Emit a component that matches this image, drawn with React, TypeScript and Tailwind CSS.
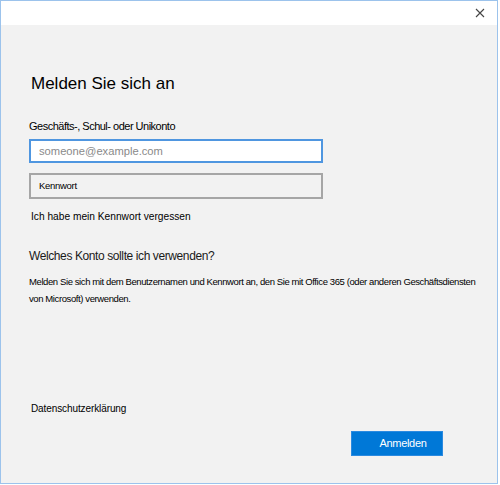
import React from 'react';

export default function App() {
  return (
    <div className="w-[500px] h-[485px] bg-white" style={{ fontFamily: '"Liberation Sans", Arial, sans-serif' }}>
      <div className="w-[498px] h-[484px] border border-[#9cc3ec] flex flex-col bg-[#f2f2f2]">
        {/* Title bar */}
        <div className="h-[24px] bg-white flex justify-end items-center pr-[12px]">
          <svg width="10" height="10" viewBox="0 0 10 10" className="text-[#444]">
            <path d="M1 1 L9 9 M9 1 L1 9" stroke="currentColor" strokeWidth="1.1" />
          </svg>
        </div>

        <div className="flex-1 flex flex-col px-[28px]">
          <h1 className="mt-[48px] ml-[2px] text-[17px] leading-[22px] text-black">Melden Sie sich an</h1>

          <div className="mt-[23px] text-[11px] tracking-[-0.5px] leading-[16px] text-black">Geschäfts-, Schul- oder Unikonto</div>

          <input
            className="mt-[5px] w-[294px] h-[24px] border-2 border-[#4f96e0] bg-white px-[8px] text-[11.2px] outline-none placeholder:text-[#8a8a8a]"
            placeholder="someone@example.com"
          />
          <div className="mt-[10px] w-[294px] h-[26px] border-2 border-[#a6a6a6] flex items-center px-[8px] text-[9.5px] tracking-[-0.3px] text-black">
            Kennwort
          </div>

          <a className="mt-[10px] ml-[2px] text-[10.2px] leading-[16px] text-black">Ich habe mein Kennwort vergessen</a>

          <h2 className="mt-[22px] text-[12px] tracking-[-0.4px] leading-[18px] text-[#1a1a1a]">Welches Konto sollte ich verwenden?</h2>
          <p className="mt-[8px] -mr-[24px] whitespace-nowrap text-[9.5px] tracking-[-0.4px] leading-[17px] text-black">
            Melden Sie sich mit dem Benutzernamen und Kennwort an, den Sie mit Office 365 (oder anderen Geschäftsdiensten
            <br />
            von Microsoft) verwenden.
          </p>

          <div className="flex-1" />
          <a className="ml-[2px] text-[10px] tracking-[-0.1px] leading-[16px] text-black">Datenschutzerklärung</a>

          <div className="mt-[14px] mb-[27px] flex justify-end pr-[26px]">
            <button className="w-[92px] h-[25px] pl-[12px] bg-[#0078d7] border border-[#2b8ae0] text-white text-[11px] tracking-[-0.3px]">Anmelden</button>
          </div>
        </div>
      </div>
    </div>
  );
}
